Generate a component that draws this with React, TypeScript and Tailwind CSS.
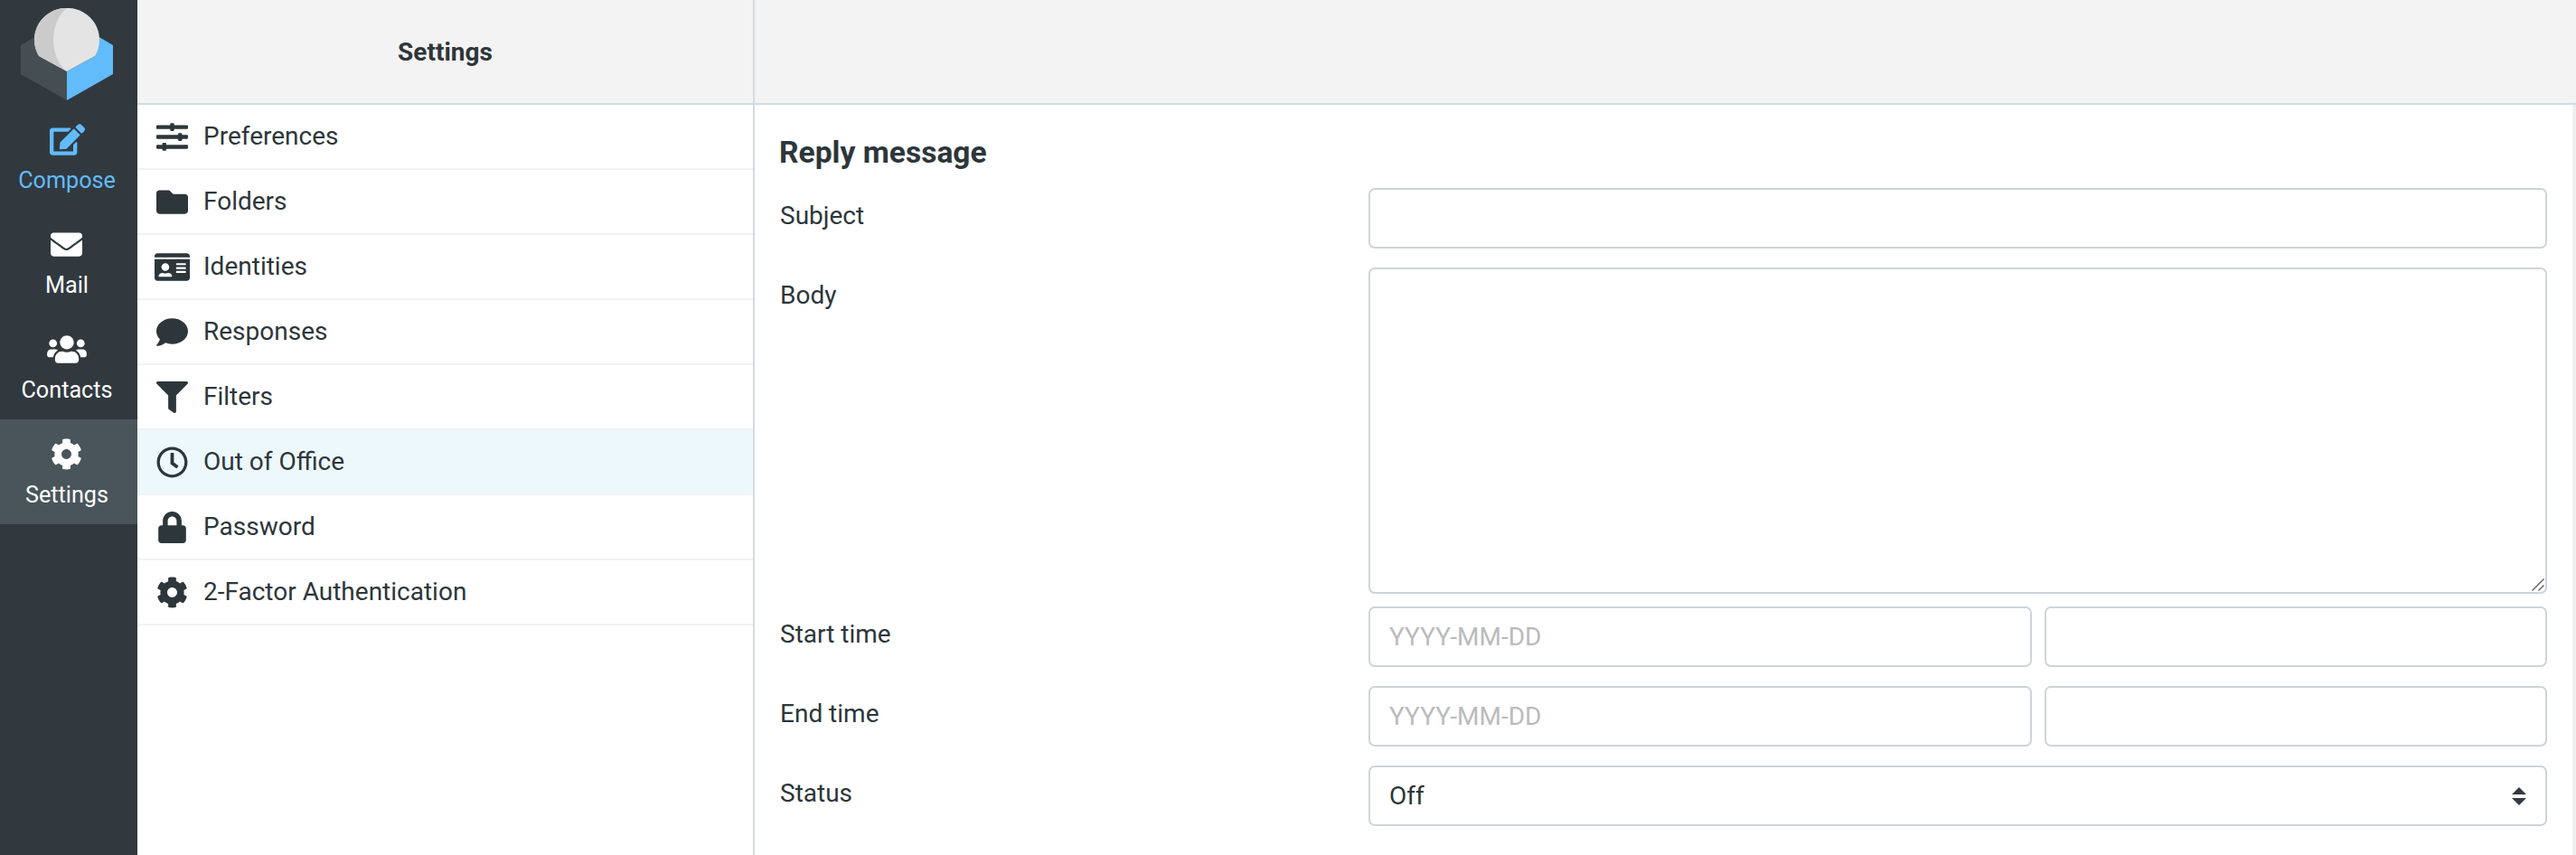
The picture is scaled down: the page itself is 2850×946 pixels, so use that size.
import { useState } from 'react'
import type { IconType } from 'react-icons'
import {
  FaCog,
  FaComment,
  FaEdit,
  FaEnvelope,
  FaFilter,
  FaFolder,
  FaIdCard,
  FaLock,
  FaRegClock,
  FaSlidersH,
  FaUsers,
} from 'react-icons/fa'

const tasks: { label: string; icon: IconType; iconClass: string; className: string }[] = [
  { label: 'Compose', icon: FaEdit, iconClass: 'w-[39px]', className: 'text-[#62bbfb]' },
  { label: 'Mail', icon: FaEnvelope, iconClass: 'w-[35px] mr-px', className: 'text-white' },
  { label: 'Contacts', icon: FaUsers, iconClass: 'w-[44px]', className: 'text-white' },
  { label: 'Settings', icon: FaCog, iconClass: 'w-[35px] mr-px', className: 'text-white bg-[#49555a]' },
]

const sections: { label: string; icon: IconType; iconClass: string }[] = [
  { label: 'Preferences', icon: FaSlidersH, iconClass: 'w-[35px]' },
  { label: 'Folders', icon: FaFolder, iconClass: 'w-[35px]' },
  { label: 'Identities', icon: FaIdCard, iconClass: 'w-[39px]' },
  { label: 'Responses', icon: FaComment, iconClass: 'w-[35px]' },
  { label: 'Filters', icon: FaFilter, iconClass: 'w-[35px]' },
  { label: 'Out of Office', icon: FaRegClock, iconClass: 'w-[35px]' },
  { label: 'Password', icon: FaLock, iconClass: 'w-[31px]' },
  { label: '2-Factor Authentication', icon: FaCog, iconClass: 'w-[35px]' },
]

const field =
  'block h-[67px] min-w-0 rounded-[7px] border-2 border-[#ced4da] bg-white px-[21px] leading-[42px] outline-none placeholder:text-[#bbbbbb]'

function Logo() {
  return (
    <svg viewBox="0 0 102 102" className="h-[102px] w-[102px]">
      <path d="M17 31 0 41v32l51 29V70L20 53Z" fill="#454f53" />
      <path d="M85 31l17 10v32l-51 29V70l31-17Z" fill="#62bbfb" />
      <path d="M51 0a35 35 0 0 1 31 53L51 70 20 53A35 35 0 0 1 51 0Z" fill="#e4e4e4" />
      <path d="M51 0A35 35 0 0 0 20 53l31 17C31 54 31 16 51 0Z" fill="#cbcbcb" />
    </svg>
  )
}

function FormRow({ label, children }: { label: string; children: React.ReactNode }) {
  return (
    <div className="flex items-start">
      <label className="w-[652px] shrink-0 pl-px pt-2.5 leading-[42px]">{label}</label>
      <div className="flex min-w-0 flex-1 gap-3.5">{children}</div>
    </div>
  )
}

export default function App() {
  const [selected, setSelected] = useState('Out of Office')

  return (
    <div className="flex h-[946px] w-[2850px] overflow-hidden bg-white font-['Roboto',sans-serif] text-[28px] text-[#2d363a]">
      <nav className="flex w-[152px] shrink-0 flex-col bg-[#31393f]">
        <div className="flex h-[116px] pl-[23px] pt-[9px]">
          <Logo />
        </div>
        {tasks.map(({ label, icon: Icon, iconClass, className }) => (
          <a key={label} className={`flex h-[116px] flex-col items-center pr-1 pt-[21px] ${className}`}>
            <Icon className={`h-[35px] ${iconClass}`} />
            <span className="mt-[9px] text-[25.2px] leading-[38px]">{label}</span>
          </a>
        ))}
      </nav>

      <section className="flex w-[683px] shrink-0 flex-col border-r-2 border-[#d4dadf]">
        <header className="flex h-[116px] items-center justify-center border-b-2 border-[#d4dadf] bg-[#f3f3f3] pt-0.5 font-bold">
          Settings
        </header>
        <ul>
          {sections.map(({ label, icon: Icon, iconClass }) => (
            <li
              key={label}
              onClick={() => setSelected(label)}
              className={`flex h-[72px] items-center border-b-2 border-[#f1f2f3] pl-[17px] ${
                selected === label ? 'bg-[#edf8fd]' : ''
              }`}
            >
              <span className="flex w-[43px] justify-center">
                <Icon className={`h-[35px] ${iconClass}`} />
              </span>
              <span className="ml-[13px] leading-[42px]">{label}</span>
            </li>
          ))}
        </ul>
      </section>

      <main className="flex min-w-0 flex-1 flex-col">
        <header className="h-[116px] shrink-0 border-b-2 border-[#d4dadf] bg-[#f3f3f3]" />
        <div className="flex-1 border-r-4 border-[#f0f0f0] pl-[27px] pr-7 pt-7">
          <h2 className="mb-3.5 text-[33.6px] font-bold leading-[50px]">Reply message</h2>
          <form className="flex flex-col gap-[21px]">
            <FormRow label="Subject">
              <input type="text" className={`${field} flex-1`} />
            </FormRow>
            <FormRow label="Body">
              <div className="relative -mb-[7px] flex-1">
                <textarea className="block h-[361px] w-full resize-none rounded-[7px] border-2 border-[#ced4da] px-[21px] py-2.5 outline-none" />
                <svg
                  viewBox="0 0 14 14"
                  className="absolute bottom-[3px] right-[3px] h-3.5 w-3.5"
                  stroke="#5c5c5c"
                  strokeWidth="1.4"
                >
                  <path d="M.5 13.5 13.5.5M7.5 13.5l6-6" />
                </svg>
              </div>
            </FormRow>
            <FormRow label="Start time">
              <input type="text" placeholder="YYYY-MM-DD" className={`${field} w-[734px]`} />
              <input type="text" className={`${field} flex-1`} />
            </FormRow>
            <FormRow label="End time">
              <input type="text" placeholder="YYYY-MM-DD" className={`${field} w-[734px]`} />
              <input type="text" className={`${field} flex-1`} />
            </FormRow>
            <FormRow label="Status">
              <div className="relative flex-1">
                <select className={`${field} w-full appearance-none`}>
                  <option>Off</option>
                  <option>On</option>
                </select>
                <svg viewBox="0 0 16 20" className="absolute right-[23px] top-6 h-5 w-4" fill="#343a40">
                  <path d="M0 8 8 0l8 8ZM0 12h16l-8 8Z" />
                </svg>
              </div>
            </FormRow>
          </form>
        </div>
      </main>
    </div>
  )
}
